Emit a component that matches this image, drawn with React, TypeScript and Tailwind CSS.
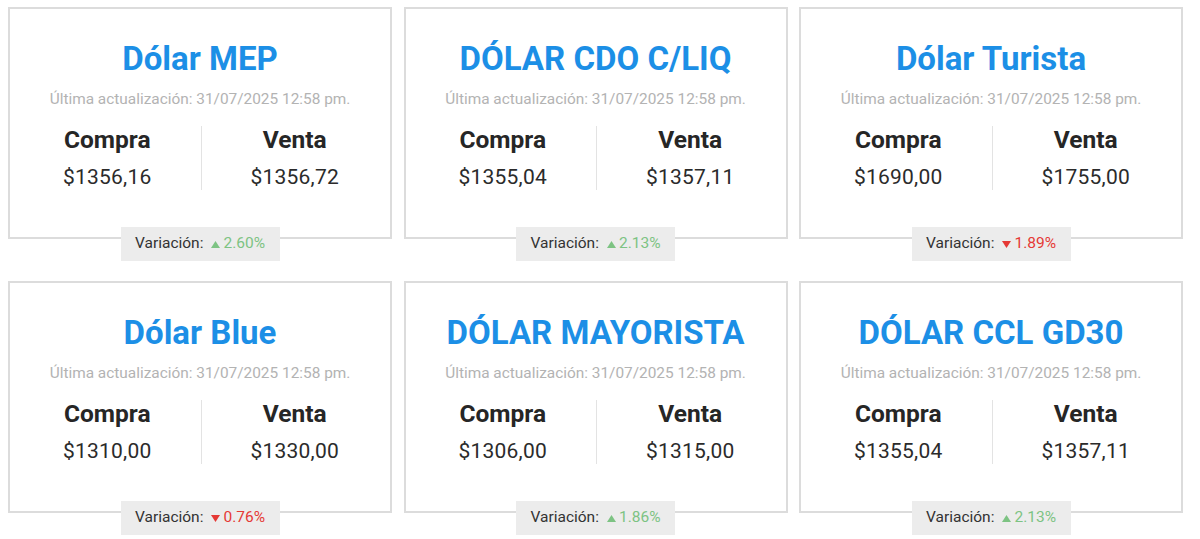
import React from "react";

type Item = { title: string; compra: string; venta: string; varUp: boolean; variation: string };

const items: Item[] = [
  { title: "Dólar MEP", compra: "$1356,16", venta: "$1356,72", varUp: true, variation: "2.60%" },
  { title: "DÓLAR CDO C/LIQ", compra: "$1355,04", venta: "$1357,11", varUp: true, variation: "2.13%" },
  { title: "Dólar Turista", compra: "$1690,00", venta: "$1755,00", varUp: false, variation: "1.89%" },
  { title: "Dólar Blue", compra: "$1310,00", venta: "$1330,00", varUp: false, variation: "0.76%" },
  { title: "DÓLAR MAYORISTA", compra: "$1306,00", venta: "$1315,00", varUp: true, variation: "1.86%" },
  { title: "DÓLAR CCL GD30", compra: "$1355,04", venta: "$1357,11", varUp: true, variation: "2.13%" },
];

function Card({ item }: { item: Item }) {
  return (
    <div className="flex flex-col items-center">
      <div className="w-full h-[232px] border-2 border-[#dcdcdc] bg-white flex flex-col items-center pt-[31px]">
        <div className="text-[33px] leading-[38px] font-bold text-[#1c8fe6]">{item.title}</div>
        <div className="mt-[11px] text-[15.4px] leading-[20px] text-[#b3b3b3]">Última actualización: 31/07/2025 12:58 pm.</div>
        <div className="mt-[16px] w-full flex">
          <div className="flex-1 flex flex-col items-center pl-[4px]">
            <div className="text-[24.5px] leading-[30px] font-bold text-[#262626]">Compra</div>
            <div className="mt-[8px] text-[21px] leading-[28px] text-[#2b2b2b] tracking-[0.2px]">{item.compra}</div>
          </div>
          <div className="w-px bg-[#e3e3e3] h-[64px] mt-[1px]" />
          <div className="flex-1 flex flex-col items-center pr-[2px]">
            <div className="text-[24.5px] leading-[30px] font-bold text-[#262626]">Venta</div>
            <div className="mt-[8px] text-[21px] leading-[28px] text-[#2b2b2b] tracking-[0.2px]">{item.venta}</div>
          </div>
        </div>
      </div>
      <div className="-mt-[12px] w-[159px] h-[34px] bg-[#ececec] flex items-center justify-center text-[15.5px] text-[#333333] relative">
        <span>Variación:</span>
        <span className={`ml-[8px] flex items-center ${item.varUp ? "text-[#7dc383]" : "text-[#e53935]"}`}>
          {item.varUp ? (
            <svg width="9" height="7" viewBox="0 0 9 7" className="mr-[3px]"><polygon points="4.5,0 9,7 0,7" fill="#7dc383" /></svg>
          ) : (
            <svg width="9" height="7" viewBox="0 0 9 7" className="mr-[3px]"><polygon points="0,0 9,0 4.5,7" fill="#e53935" /></svg>
          )}
          {item.variation}
        </span>
      </div>
    </div>
  );
}

export default function App() {
  return (
    <div className="w-[1200px] h-[539px] bg-white overflow-hidden" style={{ fontFamily: "Roboto, 'Liberation Sans', sans-serif" }}>
      <div className="grid grid-cols-3 gap-x-[11.5px] gap-y-[20px] pl-[8px] pr-[17px] pt-[7px]">
        {items.map((it, i) => (
          <Card key={i} item={it} />
        ))}
      </div>
    </div>
  );
}
